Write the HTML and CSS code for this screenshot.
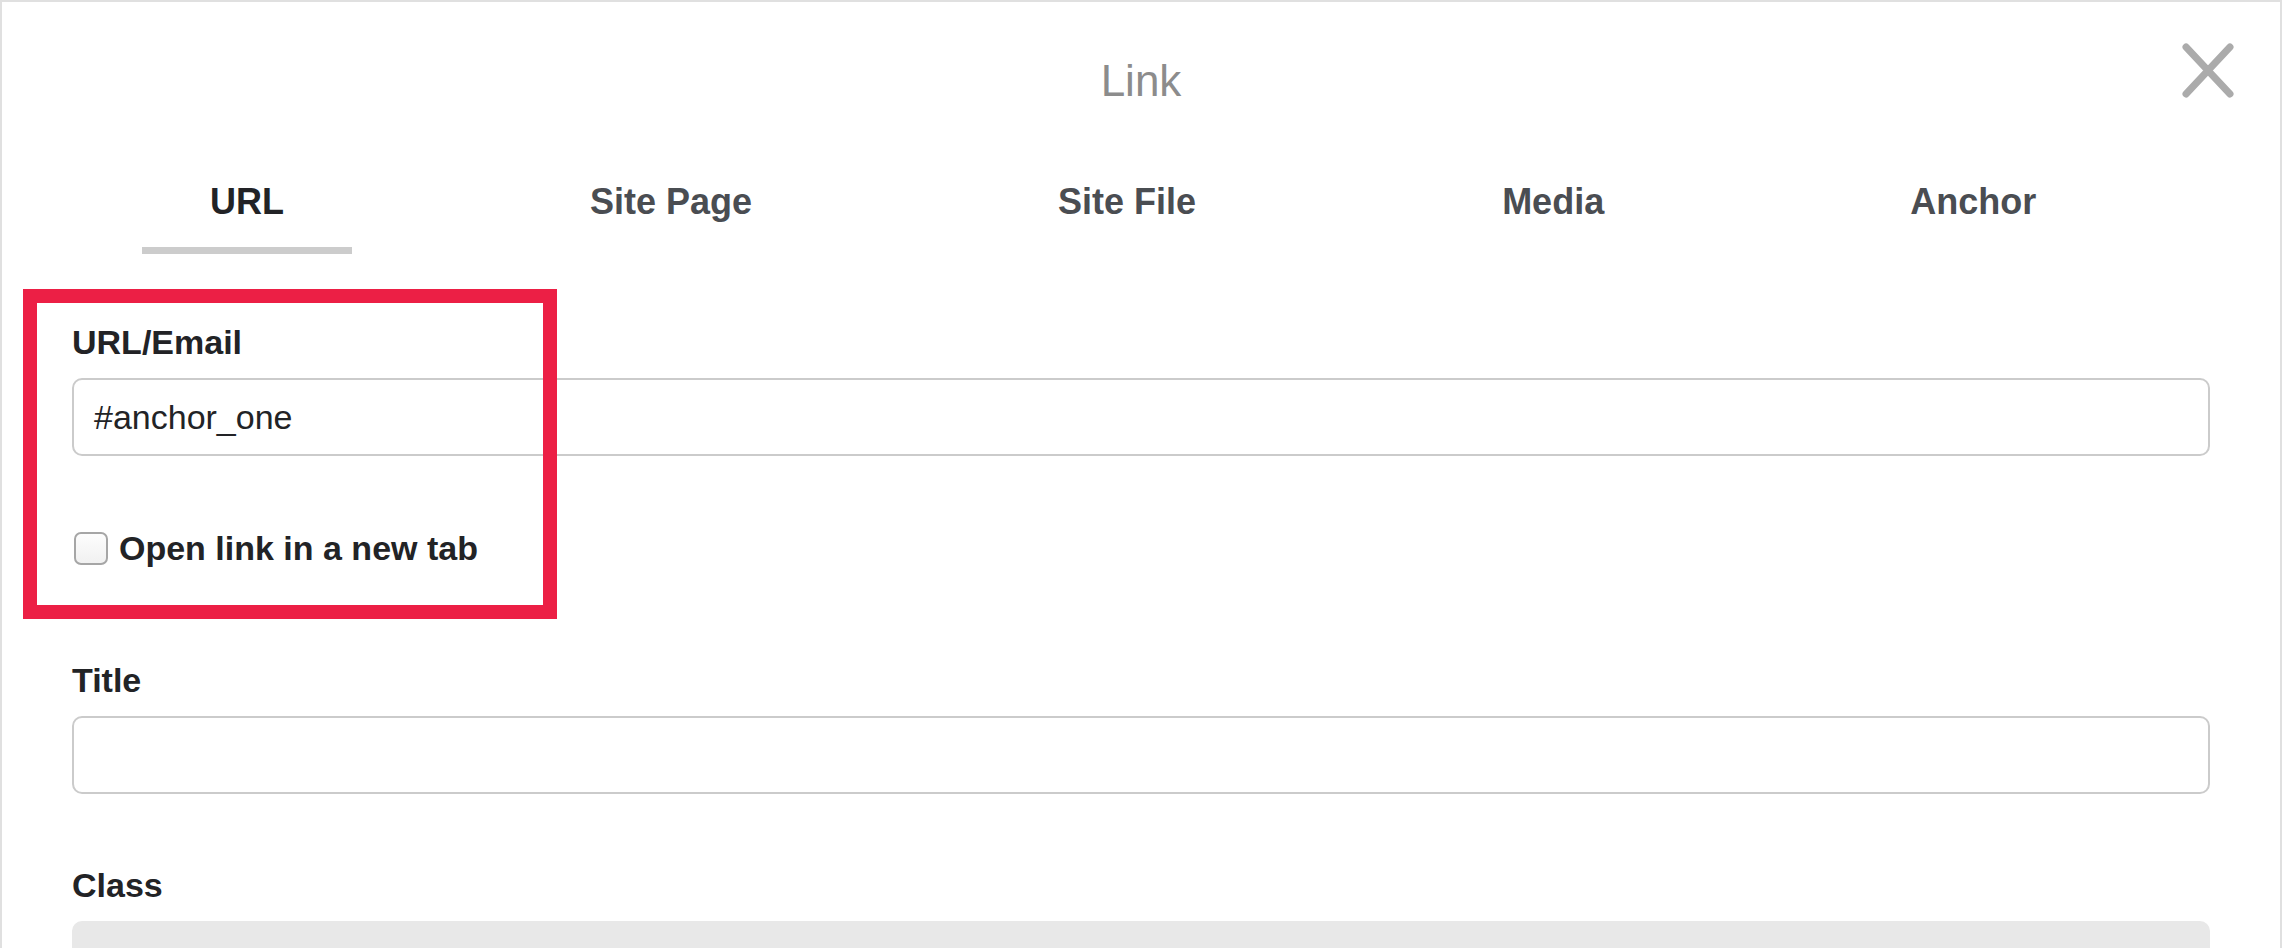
FILE: index.html
```html
<!DOCTYPE html>
<html lang="en">
<head>
<meta charset="utf-8">
<title>Link</title>
<link rel="stylesheet" href="styles.css">
</head>
<body>
<div class="dialog">
  <header class="dlg-head">
    <h1 class="dlg-title">Link</h1>
    <button class="close" type="button" aria-label="Close">
      <svg width="52" height="55" viewBox="0 0 52 55">
        <path d="M4 4 L48 51 M48 4 L4 51" stroke="#ababab" stroke-width="7" stroke-linecap="round" fill="none"/>
      </svg>
    </button>
  </header>

  <nav class="tabs">
    <span class="tab active">URL</span>
    <span class="tab">Site Page</span>
    <span class="tab">Site File</span>
    <span class="tab">Media</span>
    <span class="tab">Anchor</span>
  </nav>

  <div class="dlg-body">
    <div class="group group-url">
      <div class="lbl">URL/Email</div>
      <div class="field">#anchor_one</div>
      <div class="check"><span class="box"></span><span class="check-text">Open link in a new tab</span></div>
    </div>
    <div class="group">
      <div class="lbl">Title</div>
      <div class="field"></div>
    </div>
    <div class="group">
      <div class="lbl">Class</div>
      <div class="field field-disabled"></div>
    </div>
  </div>

  <div class="highlight"></div>
</div>
</body>
</html>
```

FILE: styles.css
```css
html, body {
  margin: 0;
  padding: 0;
  background: #ffffff;
}

body {
  font-family: "Liberation Sans", Arial, Helvetica, sans-serif;
  color: #222326;
  overflow: hidden;
}

.dialog {
  position: relative;
  box-sizing: border-box;
  height: 948px;
  overflow: hidden;
  border: 2px solid #e0e0e0;
  border-bottom: none;
  background: #fff;
}

.dlg-head {
  padding-top: 49px;
  display: flex;
  justify-content: center;
}

.dlg-title {
  margin: 0;
  font-size: 44px;
  line-height: 60px;
  font-weight: normal;
  color: #8c8c8c;
}

.close {
  position: absolute;
  top: 41px;
  right: 46px;
  padding: 0;
  margin: 0;
  border: none;
  background: none;
  display: block;
  width: 52px;
  height: 55px;
}

.close svg {
  display: block;
}

.tabs {
  display: flex;
  gap: 170px;
  margin-top: 71px;
  padding-left: 140px;
}

.tab {
  font-size: 36px;
  line-height: 40px;
  font-weight: bold;
  color: #4a4d52;
  padding: 0 68px 25px;
  border-bottom: 7px solid transparent;
}

.tab.active {
  color: #222326;
  border-bottom-color: #cccccc;
}

.dlg-body {
  padding: 68px 70px 0;
}

.group {
  margin-bottom: 71px;
}

.group-url {
  margin-bottom: 92px;
}

.lbl {
  font-size: 34px;
  line-height: 40px;
  font-weight: bold;
  color: #222326;
  margin-bottom: 16px;
}

.field {
  box-sizing: border-box;
  height: 78px;
  border: 2px solid #cbcbcb;
  border-radius: 10px;
  padding: 0 20px;
  font-size: 34px;
  line-height: 74px;
  color: #222326;
  background: #fff;
}

.field-disabled {
  background: #e8e8e8;
  border-color: #e8e8e8;
  margin-top: 2px;
}

.check {
  display: flex;
  align-items: center;
  gap: 11px;
  height: 40px;
  margin-top: 72px;
  padding-left: 2px;
}

.box {
  box-sizing: border-box;
  width: 34px;
  height: 33px;
  border: 2px solid #a6a6a6;
  border-radius: 7px;
  background: linear-gradient(#fdfdfd, #f1f1f1);
}

.check-text {
  font-size: 34px;
  line-height: 40px;
  font-weight: bold;
  color: #222326;
}

.highlight {
  position: absolute;
  left: 21px;
  top: 287px;
  width: 534px;
  height: 330px;
  box-sizing: border-box;
  border: 14px solid #ec1f45;
  pointer-events: none;
}
```
